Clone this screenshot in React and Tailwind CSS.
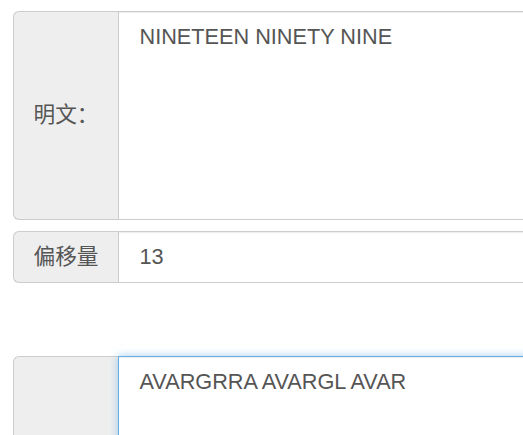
import React from "react"

const font = { fontFamily: '"Liberation Sans", "Noto Sans CJK SC", Arial, sans-serif' }

function Addon({ label }) {
  return (
    <div className="w-[105px] shrink-0 flex items-center justify-center bg-[#eeeeee] border border-r-0 border-[#cccccc] rounded-l-[6px] text-[21.7px] text-[#555555]">
      {label}
    </div>
  )
}

export default function App() {
  return (
    <div className="w-[523px] h-[435px] overflow-hidden bg-white" style={font}>
      <div className="w-[600px] pl-[13px] pt-[11px]">
        {/* 明文 */}
        <div className="flex h-[209px]">
          <Addon label="明文：" />
          <textarea
            readOnly
            defaultValue="NINETEEN NINETY NINE"
            className="flex-1 resize-none border border-[#cccccc] bg-white pl-[20.5px] pr-[18.6px] py-[9.3px] text-[21.7px] leading-[31px] text-[#555555] outline-none shadow-[inset_0_1px_1px_rgba(0,0,0,0.075)]"
            style={font}
          />
        </div>

        {/* 偏移量 */}
        <div className="flex h-[52px] mt-[11px]">
          <Addon label="偏移量" />
          <input
            readOnly
            defaultValue="13"
            className="flex-1 border border-[#cccccc] bg-white pl-[20.5px] pr-[18.6px] text-[21.7px] text-[#555555] outline-none shadow-[inset_0_1px_1px_rgba(0,0,0,0.075)]"
            style={font}
          />
        </div>

        {/* 密文 */}
        <div className="flex h-[209px] mt-[73px]">
          <Addon label="" />
          <textarea
            readOnly
            defaultValue="AVARGRRA AVARGL AVAR"
            className="flex-1 resize-none border border-[#66afe9] bg-white pl-[20.5px] pr-[18.6px] py-[9.3px] text-[21.7px] leading-[31px] text-[#555555] outline-none shadow-[inset_0_1px_1px_rgba(0,0,0,0.075),0_0_8px_rgba(102,175,233,0.6)]"
            style={font}
          />
        </div>
      </div>
    </div>
  )
}
